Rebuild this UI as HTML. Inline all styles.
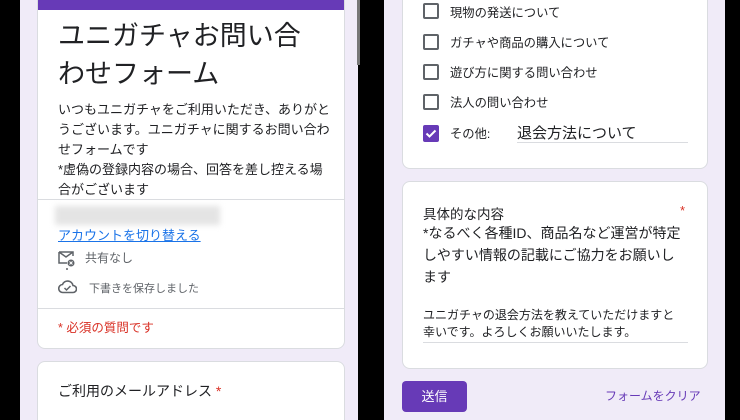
<!DOCTYPE html>
<html style="width:740px;height:420px;overflow:hidden"><head><meta charset="utf-8"><style>
*{margin:0;padding:0;box-sizing:border-box}
body{width:740px;height:420px;background:#000;position:relative;overflow:hidden;font-family:"Liberation Sans","Noto Sans CJK JP",sans-serif;color:#202124}
.abs{position:absolute}
.lav{background:#f0ebf8}
.card{position:absolute;background:#fff;border-radius:8px;border:1px solid #dadce0}
.cb{position:absolute;left:423px;width:16px;height:16px;border:2px solid #5f6368;border-radius:2px}
.ct{position:absolute;left:450px;font-size:12.3px;color:#202124;white-space:nowrap}
</style></head><body>
<div class="abs lav" style="left:20px;top:0;width:338px;height:420px"></div>
<div class="abs" style="left:357px;top:0;width:3px;height:65px;background:#777"></div>
<div class="abs lav" style="left:384px;top:0;width:341px;height:420px"></div>

<div class="card" style="left:37px;top:-8px;width:308px;height:357px;overflow:hidden">
 <div class="abs" style="left:0;top:0;width:100%;height:17px;background:#673ab7;border-radius:8px 8px 0 0"></div>
</div>
<div class="abs" style="left:58px;top:17px;font-size:27px;line-height:38px;width:260px">ユニガチャお問い合わせフォーム</div>
<div class="abs" style="left:58px;top:100px;font-size:13px;line-height:20px;width:276px">いつもユニガチャをご利用いただき、ありがとうございます。ユニガチャに関するお問い合わせフォームです<br>*虚偽の登録内容の場合、回答を差し控える場合がございます</div>
<div class="abs" style="left:38px;top:199px;width:306px;height:1px;background:#dadce0"></div>
<div class="abs" style="left:55px;top:206px;width:165px;height:19px;background:#e4e4e4;filter:blur(3px)"></div>
<div class="abs" style="left:58px;top:225px;font-size:13px;color:#1a73e8;text-decoration:underline">アカウントを切り替える</div>
<svg class="abs" style="left:58px;top:250px" width="18" height="20" viewBox="0 0 18 20"><path d="M1 2h14v4M1 2v11h8M1 2l7 5 7-5" fill="none" stroke="#5f6368" stroke-width="1.5"/><circle cx="13" cy="13" r="3.5" fill="#5f6368"/><path d="M11.5 11.5l3 3M14.5 11.5l-3 3" stroke="#fff" stroke-width="1"/><circle cx="9" cy="19" r="1" fill="#5f6368"/></svg>
<div class="abs" style="left:85px;top:249px;font-size:12px;color:#5f6368">共有なし</div>
<svg class="abs" style="left:58px;top:279px" width="19" height="15" viewBox="0 0 19 15"><path d="M5 13.5h10a3.5 3.5 0 0 0 0-7 5.5 5.5 0 0 0-10.5-1A4 4 0 0 0 5 13.5z" fill="none" stroke="#5f6368" stroke-width="1.6"/><path d="M6.5 9l2 2 4-4" fill="none" stroke="#5f6368" stroke-width="1.5"/></svg>
<div class="abs" style="left:89px;top:280px;font-size:11px;color:#5f6368">下書きを保存しました</div>
<div class="abs" style="left:38px;top:308px;width:306px;height:1px;background:#dadce0"></div>
<div class="abs" style="left:58px;top:317px;font-size:12.5px;color:#d93025">* 必須の質問です</div>
<div class="card" style="left:37px;top:361px;width:308px;height:70px"></div>
<div class="abs" style="left:58px;top:381px;font-size:14px">ご利用のメールアドレス <span style="color:#d93025">*</span></div>

<div class="card" style="left:402px;top:-10px;width:306px;height:179px"></div>
<div class="cb" style="top:3px"></div><div class="ct" style="top:3px">現物の発送について</div>
<div class="cb" style="top:34px"></div><div class="ct" style="top:33px">ガチャや商品の購入について</div>
<div class="cb" style="top:64px"></div><div class="ct" style="top:63px">遊び方に関する問い合わせ</div>
<div class="cb" style="top:94px"></div><div class="ct" style="top:93px">法人の問い合わせ</div>
<svg class="abs" style="left:423px;top:125px" width="16" height="17" viewBox="0 0 16 17"><rect width="16" height="17" rx="2" fill="#673ab7"/><path d="M3.5 8.5l3 3 6-6" fill="none" stroke="#fff" stroke-width="2"/></svg>
<div class="ct" style="top:124px">その他:</div>
<div class="abs" style="left:517px;top:122px;font-size:15px">退会方法について</div>
<div class="abs" style="left:517px;top:142px;width:171px;height:1px;background:#dadce0"></div>

<div class="card" style="left:402px;top:181px;width:306px;height:188px"></div>
<div class="abs" style="left:423px;top:203px;font-size:13.5px">具体的な内容</div>
<div class="abs" style="left:680px;top:203px;font-size:13px;color:#d93025">*</div>
<div class="abs" style="left:423px;top:222px;font-size:14px;line-height:22px;width:264px">*なるべく各種ID、商品名など運営が特定しやすい情報の記載にご協力をお願いします</div>
<div class="abs" style="left:423px;top:307px;font-size:12px;line-height:17px;width:256px">ユニガチャの退会方法を教えていただけますと幸いです。よろしくお願いいたします。</div>
<div class="abs" style="left:423px;top:342px;width:265px;height:1px;background:#dadce0"></div>
<div class="abs" style="left:402px;top:381px;width:65px;height:31px;background:#673ab7;border-radius:4px;color:#fff;font-size:13px;text-align:center;line-height:31px">送信</div>
<div class="abs" style="left:605px;top:387px;font-size:12px;color:#673ab7">フォームをクリア</div>
</body></html>
